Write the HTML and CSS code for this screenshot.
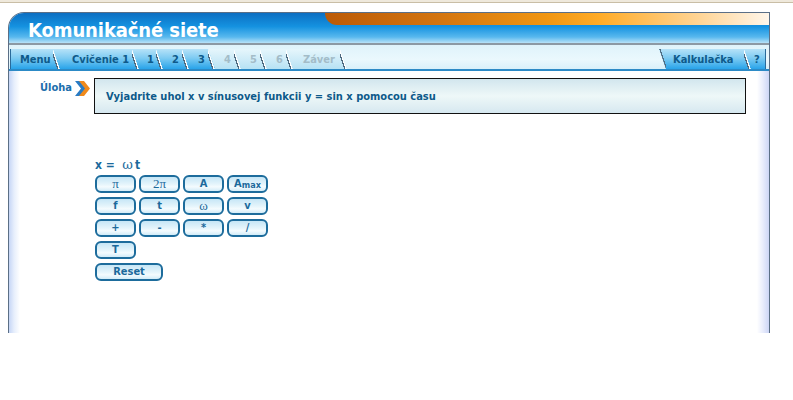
FILE: index.html
```html
<!DOCTYPE html>
<html lang="sk">
<head>
<meta charset="utf-8">
<title>Komunikačné siete</title>
<link rel="stylesheet" href="styles.css">
</head>
<body>
<div class="topstrip"></div>
<div class="app">
  <div class="header">
    <div class="band"></div>
    <h1 class="title">Komunikačné siete</h1>
  </div>
  <div class="tabbar">
    <div class="tabs">
      <span class="tab t-menu">Menu</span>
      <span class="tab t-cv">Cvičenie 1</span>
      <span class="tab t-num t-one">1</span>
      <span class="tab t-num">2</span>
      <span class="tab t-num">3</span>
      <span class="tab t-num off">4</span>
      <span class="tab t-num off">5</span>
      <span class="tab t-num off">6</span>
      <span class="tab t-zaver off">Záver</span>
    </div>
    <div class="tabs right">
      <span class="tab t-kalk">Kalkulačka</span>
      <span class="tab t-q">?</span>
    </div>
  </div>
  <div class="content">
    <div class="task-row">
      <span class="task-label">Úloha</span>
      <svg class="task-arrow" width="16" height="15" viewBox="0 0 16 15">
        <polygon points="0,0 5,0 11,7.5 5,15 0,15 6,7.5" fill="#2a7cc4"/>
        <polygon points="4,0 9,0 15,7.5 9,15 4,15 10,7.5" fill="#f08a1c"/>
      </svg>
      <div class="task-box">Vyjadrite uhol x v sínusovej funkcii y = sin x pomocou času</div>
    </div>
    <div class="calc">
      <div class="formula">x =&nbsp; <span class="sym">ω</span>t</div>
      <div class="keys">
        <button class="key sym">π</button>
        <button class="key"><span class="sym">2π</span></button>
        <button class="key">A</button>
        <button class="key">A<sub>max</sub></button>
        <button class="key">f</button>
        <button class="key">t</button>
        <button class="key sym">ω</button>
        <button class="key">v</button>
        <button class="key">+</button>
        <button class="key">-</button>
        <button class="key">*</button>
        <button class="key">/</button>
        <button class="key">T</button>
      </div>
      <button class="key reset">Reset</button>
    </div>
  </div>
</div>
</body>
</html>
```
FILE: styles.css
```css
html, body {
  margin: 0;
  padding: 0;
  background: #ffffff;
  font-family: "DejaVu Sans Condensed", "DejaVu Sans", sans-serif;
}

.topstrip {
  height: 2px;
  background: #efe9dc;
  border-bottom: 1px solid #c9bea6;
}

.app {
  margin: 9px 0 0 8px;
  width: 760px;
  border: 1px solid #5b6f86;
  border-bottom: none;
  border-top-left-radius: 16px;
  overflow: hidden;
}

.header {
  position: relative;
  height: 30px;
  background: linear-gradient(to bottom, #0c6fc2 0%, #1592e0 45%, #58b8ee 80%, #b8e2f8 100%);
  border-bottom: 2px solid #8c99a4;
}

.band {
  position: absolute;
  left: 316px;
  top: 0;
  right: 0;
  height: 12px;
  border-bottom-left-radius: 14px;
  background: linear-gradient(to right, #bb5a06 0%, #d27410 25%, #f09612 50%, #ffac28 62%, #ffd699 85%, #fff6ea 100%);
}

.title {
  position: relative;
  margin: 0;
  padding: 6px 0 0 19px;
  font-family: "DejaVu Sans Condensed", "DejaVu Sans", sans-serif;
  font-weight: bold;
  font-size: 20px;
  line-height: 22px;
  color: #ffffff;
  letter-spacing: -0.1px;
}

.tabbar {
  display: flex;
  justify-content: space-between;
  height: 20px;
  padding: 4px 3px 0 1px;
  background: linear-gradient(to bottom, #dff3fb, #eaf8fd 60%, #d8f0fa);
  border-bottom: 2px solid #2c8ac6;
}

.tabs {
  display: flex;
}

.tab {
  position: relative;
  box-sizing: border-box;
  display: flex;
  align-items: center;
  height: 20px;
  margin-right: -7px;
  font-size: 11px;
  font-weight: bold;
  color: #0e5a8a;
  white-space: nowrap;
  background: linear-gradient(to bottom, #b6e2f8 0%, #7ecbf2 45%, #28a4ea 100%);
  clip-path: polygon(0 0, calc(100% - 7px) 0, 100% 100%, 0 100%);
}

.tab::after {
  content: "";
  position: absolute;
  right: 0;
  top: 0;
  width: 7px;
  height: 100%;
  background: linear-gradient(to top right, transparent calc(50% - 2.6px), #4e6a80 calc(50% - 2.6px), #4e6a80 calc(50% - 1.3px), #ffffff calc(50% - 1.3px), #ffffff 50%, transparent 50%);
}

.tabs .tab:nth-child(1) { z-index: 9; }
.tabs .tab:nth-child(2) { z-index: 8; }
.tabs .tab:nth-child(3) { z-index: 7; }
.tabs .tab:nth-child(4) { z-index: 6; }
.tabs .tab:nth-child(5) { z-index: 5; }
.tabs .tab:nth-child(6) { z-index: 4; }
.tabs .tab:nth-child(7) { z-index: 3; }
.tabs .tab:nth-child(8) { z-index: 2; }
.tabs .tab:nth-child(9) { z-index: 1; }

.t-menu {
  width: 50px;
  padding-left: 9px;
  border-left: 1px solid #2a6a9a;
}

.t-cv {
  width: 86px;
  padding-left: 19px;
}

.t-num {
  width: 33px;
  padding-left: 16px;
}

.t-one {
  width: 31px;
  padding-left: 15px;
}

.t-zaver {
  width: 61px;
  padding-left: 17px;
}

.tab.off {
  color: #a3bcc8;
  background: linear-gradient(to bottom, #e6f6fc 0%, #cfecf8 50%, #b6e2f4 100%);
}

.t-kalk {
  width: 92px;
  padding-left: 14px;
  clip-path: polygon(0 0, calc(100% - 7px) 0, 100% 100%, 7px 100%);
}

.t-kalk::before {
  content: "";
  position: absolute;
  left: 0;
  top: 0;
  width: 7px;
  height: 100%;
  background: linear-gradient(to top right, transparent 50%, #4e6a80 50%, #4e6a80 calc(50% + 1.3px), transparent calc(50% + 1.3px));
}

.t-q {
  width: 22px;
  margin-right: 0;
  padding-left: 10px;
  clip-path: none;
  border-right: 1px solid #2a6a9a;
}

.t-q::after {
  display: none;
}

.content {
  height: 262px;
  background: linear-gradient(to right, #c6d6f6 0px, #e6eefc 5px, #ffffff 11px, #ffffff calc(100% - 12px), #e8ecfc calc(100% - 6px), #cdd6f6 100%);
}

.task-row {
  display: flex;
  align-items: flex-start;
  padding: 7px 0 0 31px;
}

.task-label {
  margin-top: 3px;
  font-size: 11px;
  font-weight: bold;
  color: #1c6eac;
  line-height: 14px;
}

.task-arrow {
  margin: 3px 0 0 3px;
  display: block;
}

.task-box {
  margin-left: 3px;
  width: 639px;
  height: 34px;
  padding-left: 11px;
  display: flex;
  align-items: center;
  border: 1px solid #111111;
  background: linear-gradient(to bottom, #d2e6ee 0%, #eef8f8 50%, #d6e8f0 100%);
  font-size: 11px;
  font-weight: bold;
  color: #0e5a8a;
}

.calc {
  padding: 44px 0 0 86px;
}

.formula {
  font-size: 12px;
  font-weight: bold;
  color: #1b6a9c;
  line-height: 14px;
  height: 17px;
}

.sym {
  font-family: "DejaVu Serif", "Liberation Serif", serif;
  font-weight: normal;
}

.formula .sym {
  font-size: 13px;
  margin-right: 2px;
}

.keys {
  display: grid;
  grid-template-columns: repeat(4, 41px);
  column-gap: 3px;
  row-gap: 4px;
  width: 173px;
}

.key {
  height: 18px;
  margin: 0;
  padding: 0;
  border: 2px solid #1d6c9c;
  border-radius: 6px;
  background: linear-gradient(to bottom, #c6e6f6 0%, #e4f4fb 50%, #f4fbfe 70%, #d2ecf8 100%);
  font-family: "DejaVu Sans Condensed", "DejaVu Sans", sans-serif;
  font-size: 11px;
  font-weight: bold;
  color: #1b6a9c;
  line-height: 12px;
  cursor: pointer;
}

.key.sym {
  font-family: "Liberation Serif", "DejaVu Serif", serif;
  font-weight: normal;
  font-size: 13px;
}

.key .sym {
  font-family: "Liberation Serif", "DejaVu Serif", serif;
  font-size: 13px;
}

.key sub {
  font-size: 9px;
  vertical-align: -1px;
}

.reset {
  display: block;
  margin-top: 4px;
  width: 68px;
}
```
